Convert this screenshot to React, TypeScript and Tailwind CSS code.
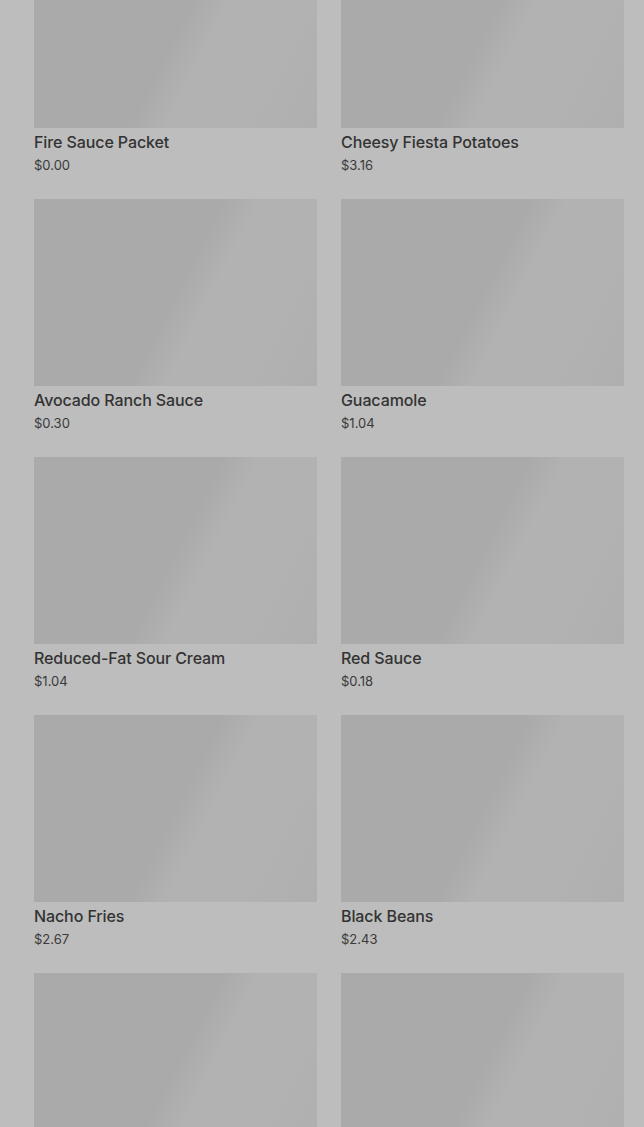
const items = [
  { name: 'Fire Sauce Packet', price: '$0.00' },
  { name: 'Cheesy Fiesta Potatoes', price: '$3.16' },
  { name: 'Avocado Ranch Sauce', price: '$0.30' },
  { name: 'Guacamole', price: '$1.04' },
  { name: 'Reduced-Fat Sour Cream', price: '$1.04' },
  { name: 'Red Sauce', price: '$0.18' },
  { name: 'Nacho Fries', price: '$2.67' },
  { name: 'Black Beans', price: '$2.43' },
];

const Thumb = () => (
  <div className="h-[187px] w-full bg-[linear-gradient(117deg,#aaaaaa_50%,#b2b2b2_60%,#b2b2b2_80%,#afafaf)]" />
);

const ProductCard = ({ name, price }: { name: string; price: string }) => (
  <div className="flex flex-col">
    <Thumb />
    <div className="mt-[2px] text-[16px] leading-[24px] font-medium tracking-[-0.1px] text-[#333]">{name}</div>
    <div className="mt-px text-[13px] leading-[20px] text-[#3a3a3a]">{price}</div>
  </div>
);

export default function App() {
  return (
    <div className="h-[1127px] overflow-hidden bg-[#bdbdbd] font-['Inter',sans-serif]">
      <div className="-mt-[59px] grid grid-cols-2 gap-x-6 gap-y-6 pl-[34px] pr-[20px]">
        {items.map((item) => (
          <ProductCard key={item.name} {...item} />
        ))}
        <Thumb />
        <Thumb />
      </div>
    </div>
  );
}
